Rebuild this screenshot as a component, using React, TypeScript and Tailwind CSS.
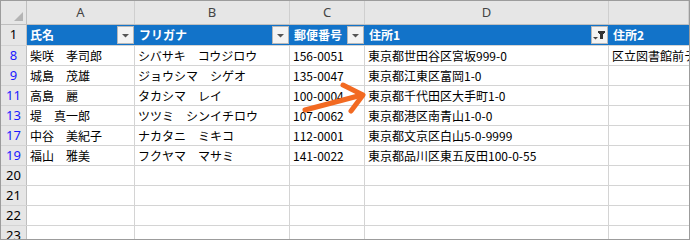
import React from "react";

const FONT = { fontFamily: '"Noto Sans CJK JP", "Noto Sans", sans-serif' };

type Row = { n: string; filtered: boolean; a: string; b: string; c: string; d: string; e: string; after?: boolean };

const rows: Row[] = [
  { n: "8", filtered: true, a: "柴咲　孝司郎", b: "シバサキ　コウジロウ", c: "156-0051", d: "東京都世田谷区宮坂999-0", e: "区立図書館前テラス", after: true },
  { n: "9", filtered: true, a: "城島　茂雄", b: "ジョウシマ　シゲオ", c: "135-0047", d: "東京都江東区富岡1-0", e: "" },
  { n: "11", filtered: true, a: "高島　麗", b: "タカシマ　レイ", c: "100-0004", d: "東京都千代田区大手町1-0", e: "", after: true },
  { n: "13", filtered: true, a: "堤　真一郎", b: "ツツミ　シンイチロウ", c: "107-0062", d: "東京都港区南青山1-0-0", e: "", after: true },
  { n: "17", filtered: true, a: "中谷　美紀子", b: "ナカタニ　ミキコ", c: "112-0001", d: "東京都文京区白山5-0-9999", e: "", after: true },
  { n: "19", filtered: true, a: "福山　雅美", b: "フクヤマ　マサミ", c: "141-0022", d: "東京都品川区東五反田100-0-55", e: "", after: true },
  { n: "20", filtered: false, a: "", b: "", c: "", d: "", e: "" },
  { n: "21", filtered: false, a: "", b: "", c: "", d: "", e: "" },
  { n: "22", filtered: false, a: "", b: "", c: "", d: "", e: "" },
  { n: "23", filtered: false, a: "", b: "", c: "", d: "", e: "" },
];

function DropBtn() {
  return (
    <div className="absolute right-[1px] top-[1px] w-[17px] h-[18px] bg-[#f3f3f3] border border-[#b8b8b8] flex items-center justify-center">
      <svg width="9" height="5" viewBox="0 0 9 5">
        <polygon points="1,1 8,1 4.5,4.5" fill="#555" />
      </svg>
    </div>
  );
}

function FilterBtn() {
  return (
    <div className="absolute right-[1px] top-[1px] w-[17px] h-[18px] bg-[#f3f3f3] border border-[#b8b8b8] flex items-center justify-center">
      <svg width="15" height="14" viewBox="0 0 15 14">
        <polygon points="1,9 6,9 3.5,11.5" fill="#444" />
        <rect x="6" y="3" width="7" height="2" fill="#333" />
        <rect x="8" y="5" width="3" height="6" fill="#333" />
        <rect x="7" y="4" width="5" height="2" fill="#333" />
      </svg>
    </div>
  );
}

const W = {
  h: "w-[26px]",
  a: "w-[108px]",
  b: "w-[155px]",
  c: "w-[75px]",
  d: "w-[244px]",
  e: "w-[80px]",
};

export default function App() {
  return (
    <div
      className="relative w-[690px] h-[240px] overflow-hidden bg-white border border-[#9c9c9c] text-[12px] text-black"
      style={FONT}
    >
      {/* Column header row */}
      <div className="flex h-[24px] bg-[#e6e6e6] border-b border-[#bfbfbf]">
        <div className={`${W.h} shrink-0 relative border-r border-[#bfbfbf]`}>
          <svg className="absolute left-0 top-0" width="26" height="23" viewBox="0 0 26 23">
            <polygon points="13,20 22,20 22,11" fill="#b4b4b4" />
          </svg>
        </div>
        {[
          [W.a, "A"],
          [W.b, "B"],
          [W.c, "C"],
          [W.d, "D"],
          [W.e, ""],
        ].map(([w, l], i) => (
          <div
            key={i}
            className={`${w} shrink-0 border-r border-[#cfcfcf] flex items-center justify-center text-[#444] text-[13px]`}
            style={{ fontFamily: '"Noto Sans", sans-serif' }}
          >
            {l}
          </div>
        ))}
      </div>

      {/* Row 1 header row */}
      <div className="flex h-[21px] border-b border-[#d4d4d4]">
        <div
          className={`${W.h} shrink-0 bg-[#e6e6e6] border-r border-[#bfbfbf] flex items-center justify-center text-[13px]`}
          style={{ fontFamily: '"Noto Sans", sans-serif' }}
        >
          1
        </div>
        <div className="flex flex-1 bg-[#1273c9] text-white font-bold">
          <div className={`${W.a} shrink-0 relative flex items-center pl-[3px]`}>
            氏名
            <DropBtn />
          </div>
          <div className={`${W.b} shrink-0 relative flex items-center pl-[3px] border-l border-[#1273c9]`}>
            フリガナ
            <DropBtn />
          </div>
          <div className={`${W.c} shrink-0 relative flex items-center pl-[3px] border-l border-[#1273c9]`}>
            郵便番号
            <DropBtn />
          </div>
          <div className={`${W.d} shrink-0 relative flex items-center pl-[3px] border-l border-[#1273c9]`}>
            住所1
            <FilterBtn />
          </div>
          <div className={`${W.e} shrink-0 relative flex items-center pl-[3px] border-l border-[#1273c9]`}>
            住所2
          </div>
        </div>
      </div>

      {/* Data rows */}
      {rows.map((r) => (
        <div key={r.n} className="flex h-[20px] border-b border-[#d4d4d4]">
          <div
            className={`${W.h} shrink-0 bg-[#e6e6e6] border-r border-[#bfbfbf] flex items-center justify-center text-[13px] ${
              r.filtered ? "text-[#1a1aff]" : "text-black"
            }`}
            style={{ fontFamily: '"Noto Sans", sans-serif' }}
          >
            {r.n}
          </div>
          <div className={`${W.a} shrink-0 border-r border-[#d4d4d4] flex items-center pl-[3px] whitespace-nowrap`}>{r.a}</div>
          <div className={`${W.b} shrink-0 border-r border-[#d4d4d4] flex items-center pl-[3px] whitespace-nowrap`}>{r.b}</div>
          <div className={`${W.c} shrink-0 border-r border-[#d4d4d4] flex items-center pl-[3px] whitespace-nowrap`}>{r.c}</div>
          <div className={`${W.d} shrink-0 border-r border-[#d4d4d4] flex items-center pl-[3px] whitespace-nowrap`}>{r.d}</div>
          <div className={`${W.e} shrink-0 overflow-hidden flex items-center pl-[3px] whitespace-nowrap`}>{r.e}</div>
        </div>
      ))}

      {/* Orange arrow overlay */}
      <svg className="absolute left-0 top-0 pointer-events-none" width="690" height="240" viewBox="0 0 690 240">
        <g stroke="#f26a22" strokeWidth="5" strokeLinecap="round" strokeLinejoin="round" fill="none">
          <line x1="304" y1="109" x2="361" y2="94" />
          <polyline points="342,84 362,94 350,110" />
        </g>
      </svg>
    </div>
  );
}
